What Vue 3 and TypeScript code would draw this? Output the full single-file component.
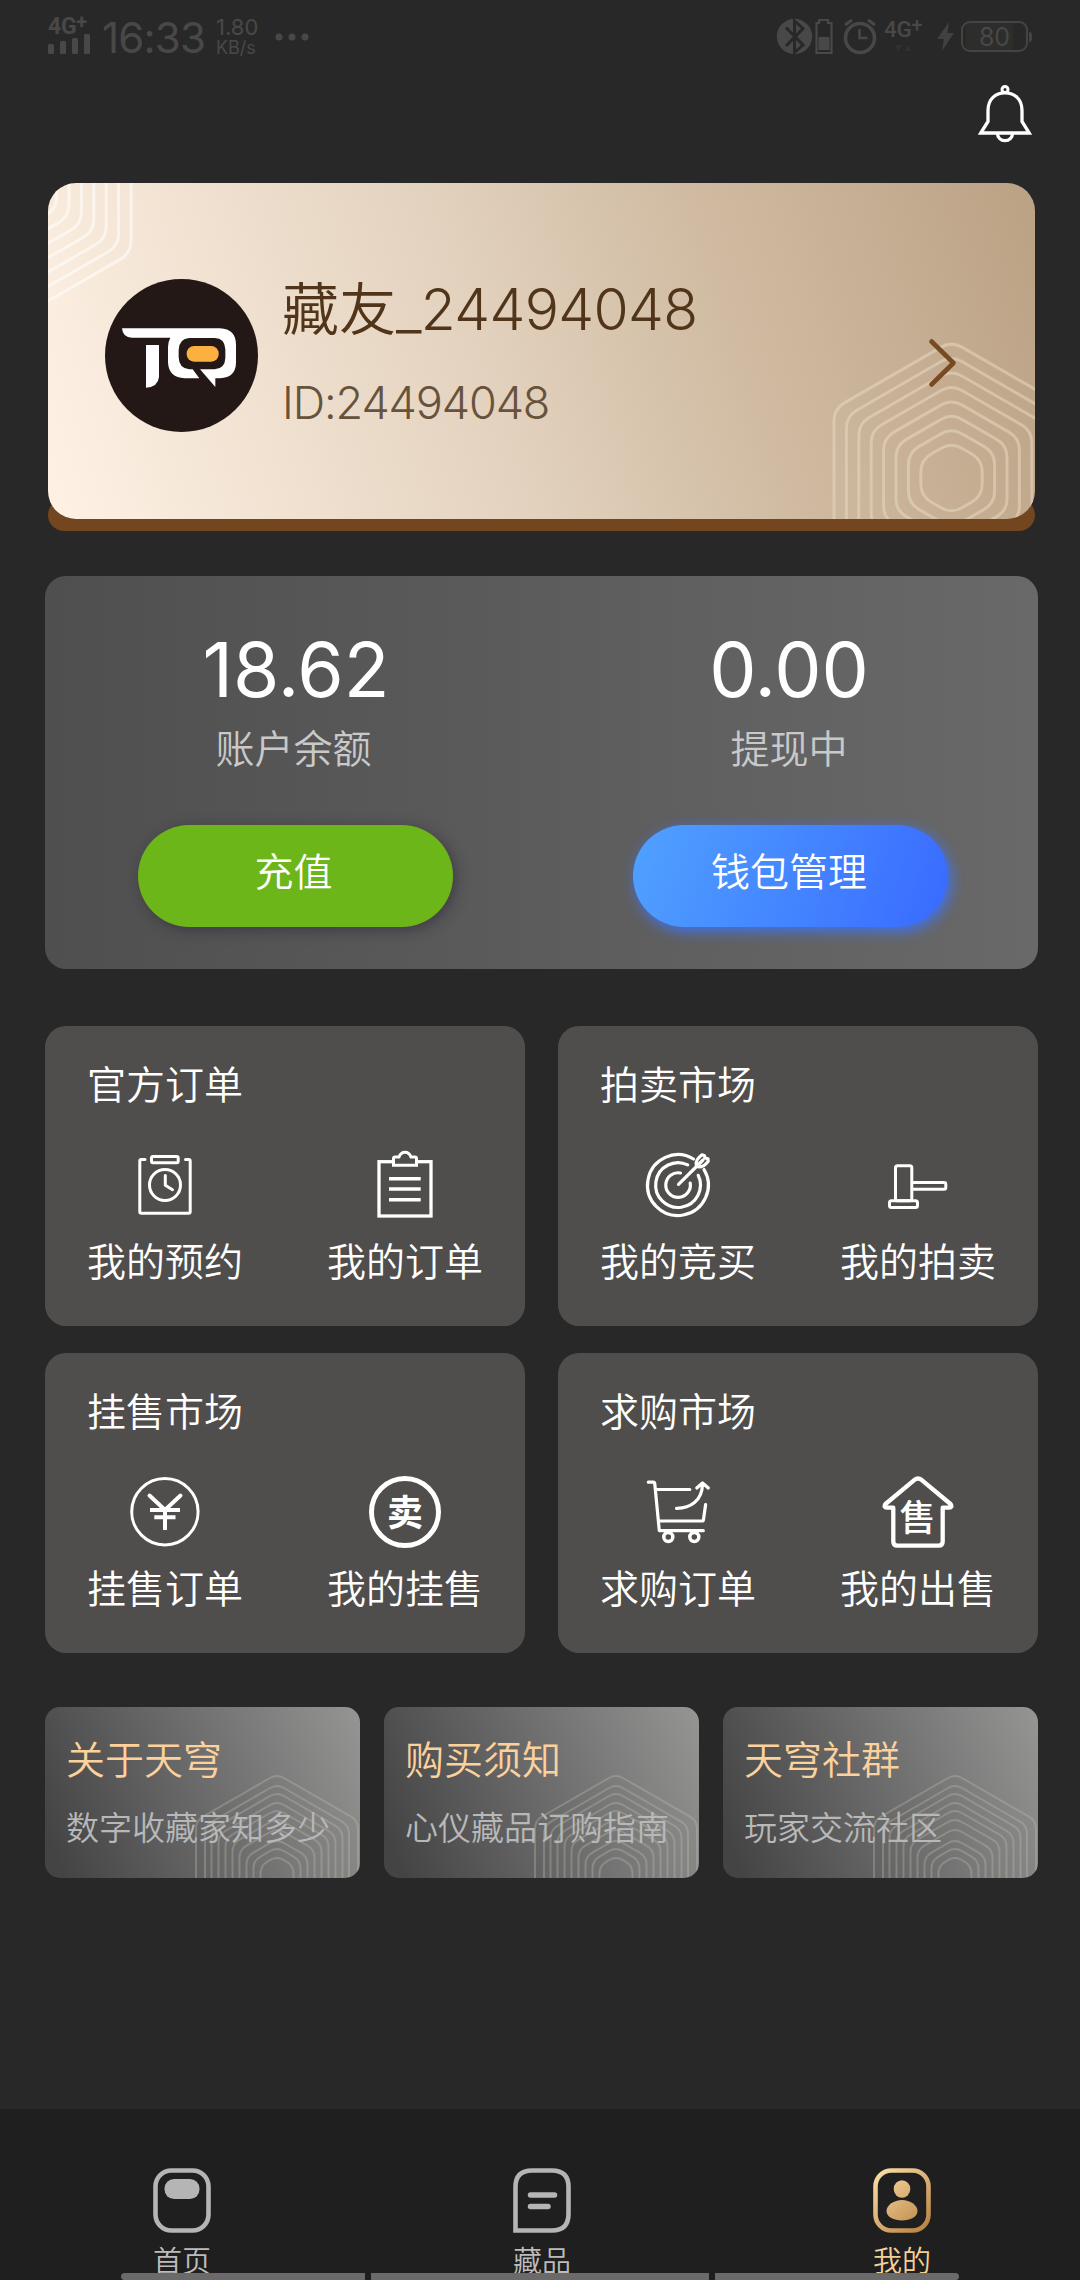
<script setup lang="ts">
interface MenuItem { label: string; icon: string }
interface MenuGroup { title: string; items: MenuItem[] }
interface Promo { title: string; desc: string }

const groups: MenuGroup[] = [
  { title: '官方订单', items: [{ label: '我的预约', icon: 'booking' }, { label: '我的订单', icon: 'orders' }] },
  { title: '拍卖市场', items: [{ label: '我的竞买', icon: 'target' }, { label: '我的拍卖', icon: 'gavel' }] },
  { title: '挂售市场', items: [{ label: '挂售订单', icon: 'yen' }, { label: '我的挂售', icon: 'sell' }] },
  { title: '求购市场', items: [{ label: '求购订单', icon: 'cart' }, { label: '我的出售', icon: 'house' }] },
]

const promos: Promo[] = [
  { title: '关于天穹', desc: '数字收藏家知多少' },
  { title: '购买须知', desc: '心仪藏品订购指南' },
  { title: '天穹社群', desc: '玩家交流社区' },
]

const tabs = [
  { label: '首页', icon: 'home', active: false },
  { label: '藏品', icon: 'collection', active: false },
  { label: '我的', icon: 'mine', active: true },
]

// Closed polygon whose corners are softened by a quadratic curve of length r.
function rounded(points: [number, number][], r: number): string {
  const n = points.length
  let d = ''
  for (let i = 0; i < n; i++) {
    const p = points[i]
    const prev = points[(i + n - 1) % n]
    const next = points[(i + 1) % n]
    const toward = (q: [number, number]) => {
      const len = Math.hypot(q[0] - p[0], q[1] - p[1])
      const k = Math.min(r / len, 0.5)
      return `${(p[0] + (q[0] - p[0]) * k).toFixed(2)} ${(p[1] + (q[1] - p[1]) * k).toFixed(2)}`
    }
    d += `${i ? 'L' : 'M'}${toward(prev)}Q${p[0]} ${p[1]} ${toward(next)}`
  }
  return d + 'Z'
}

function hexagon(cx: number, cy: number, w: number, h: number, r: number): string {
  const s = h - w * 0.577
  return rounded([[cx, cy - h], [cx + w, cy - s], [cx + w, cy + s], [cx, cy + h], [cx - w, cy + s], [cx - w, cy - s]], r)
}

const ringWidths = [0, 1, 2, 3, 4, 5, 6, 7].map((i) => 117.5 - i * 12.4)
const cornerRings = ringWidths.map((w) => hexagon(903.5, 295, w, w * 1.165, 12))
const topRings = ringWidths.map((w) => hexagon(-34.5, 1, w, w * 1.165, 12))

const promoRings = [
  [81, 100], [72, 90], [65.5, 82], [58.5, 73], [51.5, 65], [44.5, 56], [37.5, 46], [30.5, 35], [23.5, 27], [16.5, 18],
].map(([w, top]) => hexagon(232, 169, w, top + 2, 8))
</script>

<template>
  <div class="page">
    <div class="status">
      <div class="net">
        <span class="g4">4G<sup>+</sup></span>
        <svg width="44" height="21" viewBox="0 0 44 21">
          <g fill="#484848"><rect x="0" y="10" width="6" height="10" rx="1.5" /><rect x="12" y="7" width="6" height="13" rx="1.5" /><rect x="24" y="4" width="6" height="16" rx="1.5" /><rect x="36" y="0" width="6" height="20" rx="1.5" /></g>
        </svg>
      </div>
      <span class="clock">16:33</span>
      <div class="speed"><span>1.80</span><span>KB/s</span></div>
      <svg class="dots" width="36" height="10" viewBox="0 0 36 10"><g fill="#484848"><circle cx="4" cy="5" r="3.5" /><circle cx="17" cy="5" r="3.5" /><circle cx="30" cy="5" r="3.5" /></g></svg>
      <svg class="sys" width="112" height="44" viewBox="776 14 112 44">
        <circle cx="794.5" cy="36.5" r="17.7" fill="#484848" />
        <path d="M786 27.500l17 17.500l-8.500 7.500V21l8.500 7.500l-17 17.500" fill="none" stroke="#282828" stroke-width="3" />
        <path d="M819 20h9v3h3.500v30h-15V23h2.500z" fill="none" stroke="#484848" stroke-width="2.200" />
        <rect x="818.500" y="37" width="11" height="13" fill="#484848" />
        <g fill="none" stroke="#484848">
          <circle cx="860" cy="38" r="14.500" stroke-width="3.500" />
          <path d="M859.500 29v9h8" stroke-width="2.500" />
          <path d="M845 25l7-5M875 25l-7-5" stroke-width="3" />
        </g>
      </svg>
      <div class="net2"><span class="g4">4G<sup>+</sup></span><svg width="20" height="10" viewBox="0 0 20 10"><path d="M2 2h7l-3.500 6zM12 8h6l-3-6z" fill="#303030" /></svg></div>
      <svg class="bolt" width="18" height="30" viewBox="0 0 18 30"><path d="M12 0L0 17h7L5 29 17 11H10.500z" fill="#414141" /></svg>
      <div class="batt"><span>80</span></div>
      <i class="nub"></i>
    </div>

    <header class="top">
      <svg width="60" height="62" viewBox="0 0 60 62" fill="none" stroke="#fff" stroke-width="3.300">
        <circle cx="29" cy="5.500" r="3" stroke-width="3" />
        <path d="M4.800 49L12 37.500V26.500C12 15 19.500 8.800 29 8.800S46 15 46 26.500V37.500L53.200 49Z" />
        <path d="M21.500 49.500c0 4 3.300 7.200 7.500 7.200s7.500-3.200 7.500-7.200" />
      </svg>
    </header>

    <section class="profile">
      <div class="profile-card">
        <svg class="rings" width="987" height="336" viewBox="0 0 987 336" fill="none">
          <g stroke="#fff" stroke-opacity="0.550" stroke-width="3"><path v-for="(d, i) in topRings" :key="i" :d="d" /></g>
          <g stroke="#eadcc6" stroke-opacity="0.500" stroke-width="3"><path v-for="(d, i) in cornerRings" :key="i" :d="d" /></g>
        </svg>
        <svg class="avatar" width="153" height="153" viewBox="225 326 459 459">
          <circle cx="454.500" cy="555.500" r="229.500" fill="#231815" />
          <path fill="#fff" d="M276 474H570Q618 476 618 524V576Q618 622 570 624H556V650L510 597H554Q585 595 586 563V537Q585 504 554 503H478Q447 505 446 539V561Q447 595 478 597H488L508 624H464Q416 622 414 576V530Q414 514 421 502H306Q278 502 276 474Z" />
          <path fill="#fff" d="M348 524H387V620Q384 650 348 652Z" />
          <rect x="470" y="527" width="96" height="47" rx="22" fill="#fbb040" />
        </svg>
        <div class="who">
          <div class="name">藏友<span>_24494048</span></div>
          <div class="uid">ID:24494048</div>
        </div>
        <svg class="chev" width="30" height="52" viewBox="0 0 30 52"><path d="M3.500 4.500L25.500 26 3.500 47.500" fill="none" stroke="#784a22" stroke-width="4.600" stroke-linecap="round" stroke-linejoin="round" /></svg>
      </div>
    </section>

    <section class="wallet">
      <div class="acct"><div class="num">18.62</div><div class="cap">账户余额</div><div class="btn green">充值</div></div>
      <div class="acct"><div class="num zero">0.00</div><div class="cap">提现中</div><div class="btn blue">钱包管理</div></div>
    </section>

    <section class="menus">
      <div v-for="g in groups" :key="g.title" class="menu">
        <div class="menu-title">{{ g.title }}</div>
        <div class="menu-row">
          <div v-for="m in g.items" :key="m.label" class="menu-item">
            <svg width="72" height="72" viewBox="0 0 72 72" fill="none" stroke="#fff" stroke-width="3">
              <g v-if="m.icon === 'booking'" stroke-linecap="round" stroke-linejoin="round">
                <path d="M16 10.500H12.300Q10.800 10.500 10.800 12V62.500Q10.800 64.200 12.500 64.200H59.500Q61.200 64.200 61.200 62.500V12Q61.200 10.500 59.700 10.500H56.500" />
                <rect x="22.500" y="7.500" width="26.700" height="6.200" rx="1.500" />
                <circle cx="36" cy="36" r="15.500" />
                <path d="M36.300 26.500V36.300L43.500 40.700" />
              </g>
              <g v-else-if="m.icon === 'orders'">
                <rect x="10" y="12.700" width="52" height="54.300" stroke-width="3.300" />
                <path d="M24.500 16.200V9.500Q24.500 8 26 8H30C31.200 4.800 33 3.300 36 3.300S40.800 4.800 42 8H46Q47.500 8 47.500 9.500V16.200Z" fill="#4f4e4c" />
                <path d="M20 29.700H51.700M20 40H51.700M20 50.700H51.700" stroke-width="3.600" />
              </g>
              <g v-else-if="m.icon === 'target'" stroke-linecap="round" stroke-linejoin="round" stroke-width="3.200">
                <path d="M51.500 10A30.400 30.400 0 1 0 62 20.500" />
                <path d="M45.800 15.900A22.400 22.400 0 1 0 56.200 26.300" />
                <path d="M38.500 24A12.300 12.300 0 1 0 48.200 34" />
                <path d="M36.500 35.300L54.500 17.500M54.500 17.500C53 12 56 9 60 5.800L62.500 6.800 63 9 66 9.800 66.200 12.200C63 16.500 60 19 54.500 17.500ZM55 17L61 11" />
              </g>
              <g v-else-if="m.icon === 'gavel'" stroke-linejoin="round">
                <rect x="13.500" y="16.700" width="16.300" height="35" rx="2" />
                <rect x="7.500" y="51.800" width="28" height="6.700" rx="2" />
                <path d="M30 33.500H62Q63.800 33.500 63.800 35.200V38.500Q63.800 40.200 62 40.200H30" />
              </g>
              <g v-else-if="m.icon === 'yen'" stroke-width="4">
                <circle cx="35.900" cy="35.700" r="33.200" stroke-width="3" />
                <path d="M20.500 19.500L36 34 51.500 19.500" stroke-linecap="round" />
                <path d="M21 34H51M25.300 41.300H46.500M36 34V54" />
              </g>
              <g v-else-if="m.icon === 'sell'">
                <circle cx="36" cy="36" r="33.500" stroke-width="5" />
                <text x="36" y="49.500" class="glyph" font-size="36">卖</text>
              </g>
              <g v-else-if="m.icon === 'cart'" stroke-linecap="round" stroke-linejoin="round" stroke-width="3.200">
                <path d="M6.300 6.200H11Q12.600 6.200 12.800 8L17.300 54.700H61.300" />
                <path d="M14.500 13.500H47.800M16.800 45H60Q61.300 45 61.500 43.500L63.600 28.500" />
                <circle cx="26.300" cy="61" r="4.500" stroke-width="3.500" /><circle cx="52.300" cy="61" r="4.500" stroke-width="3.500" />
                <path d="M34.500 32.300C48 32.500 60.300 25 60.500 8M54.800 12L60.500 7 66.300 12" />
              </g>
              <g v-else stroke-linejoin="round" stroke-width="4.300">
                <path d="M32.500 3.800Q36 1.200 39.500 3.800L68.500 28Q70.800 31.700 67 31.700H60.700V65.500Q60.700 69.700 56.500 69.700H15.500Q11.300 69.700 11.300 65.500V31.700H5Q1.200 31.700 3.500 28Z" />
                <text x="35.500" y="54.800" class="glyph house" font-size="36">售</text>
              </g>
            </svg>
            <span>{{ m.label }}</span>
          </div>
        </div>
      </div>
    </section>

    <section class="promos">
      <div v-for="p in promos" :key="p.title" class="promo">
        <svg class="rings" width="315" height="171" viewBox="0 0 315 171" fill="none" stroke="#c2beae" stroke-opacity="0.330" stroke-width="2"><path v-for="(d, i) in promoRings" :key="i" :d="d" /></svg>
        <div class="promo-title">{{ p.title }}</div>
        <div class="promo-desc">{{ p.desc }}</div>
      </div>
    </section>

    <nav class="tabs">
      <div v-for="t in tabs" :key="t.label" class="tab" :class="{ active: t.active }">
        <svg width="58" height="65" viewBox="0 0 58 65" fill="none">
          <defs><linearGradient id="gold" x1="0" y1="0" x2="58" y2="65" gradientUnits="userSpaceOnUse"><stop offset="0" stop-color="#ffe3ad" /><stop offset="1" stop-color="#b47c3c" /></linearGradient></defs>
          <g v-if="t.icon === 'home'"><rect x="2.500" y="2.500" width="53" height="60" rx="16" stroke="#b5b5b5" stroke-width="4.600" /><rect x="11.500" y="11" width="35" height="20" rx="9.500" fill="#b5b5b5" /></g>
          <g v-else-if="t.icon === 'collection'" stroke="#b5b5b5"><path d="M2.500 62.500V19Q2.500 2.500 19 2.500H39Q55.500 2.500 55.500 19V46Q55.500 62.500 39 62.500Z" stroke-width="4.600" /><path d="M17.500 27H41.500M17.500 38.500H35" stroke-width="5.500" stroke-linecap="round" /></g>
          <g v-else><rect x="2.500" y="2.500" width="53" height="60" rx="16" stroke="url(#gold)" stroke-width="4.600" /><ellipse cx="29" cy="21" rx="8.300" ry="8.700" fill="url(#gold)" /><path d="M29 32C37 32 44.500 37 44.500 43S37 52.500 29 52.500 13.500 49 13.500 43 21 32 29 32Z" fill="url(#gold)" /></g>
        </svg>
        <span>{{ t.label }}</span>
      </div>
      <div class="gesture"><i class="side l"></i><i class="mid"></i><i class="side r"></i></div>
    </nav>
  </div>
</template>

<style>
body { margin: 0; background: #282828; }
</style>

<style scoped>
.page { width: 1080px; height: 2280px; display: flex; flex-direction: column; background: #282828; color: #fff; font-family: Inter, "Noto Sans CJK SC", sans-serif; font-weight: 350; overflow: hidden; box-sizing: border-box; }
.page svg { display: block; flex: none; }
.status { height: 84px; flex: none; display: flex; align-items: flex-start; color: #484848; }
.net { width: 44px; margin: 17px 0 0 48px; }
.net svg { margin-top: -2px; }
.g4 { display: block; font: 700 23px/19px Roboto, sans-serif; letter-spacing: -0.3px; white-space: nowrap; height: 19px; }
.g4 sup { font-size: 20px; line-height: 0; vertical-align: 5px; }
.clock { width: 100px; margin: 17px 0 0 10px; font-size: 42px; line-height: 42px; font-weight: 400; letter-spacing: -0.800px; white-space: nowrap; }
.speed { width: 46px; margin: 17px 0 0 14px; display: flex; flex-direction: column; font: 400 22px/21px Inter, sans-serif; white-space: nowrap; }
.speed span + span { font-size: 18px; line-height: 19px; }
.dots { margin: 32px 0 0 13px; }
.sys { margin: 14px 0 0 465px; }
.net2 { width: 42px; margin: 20px 0 0 -4px; }
.net2 .g4 { font-weight: 500; font-size: 22.500px; }
.net2 svg { margin: 4px 0 0 9px; }
.bolt { margin: 22px 0 0 11px; }
.batt { width: 63px; height: 27px; margin: 21px 0 0 6px; border: 2px solid #444; border-radius: 9px; display: flex; justify-content: center; align-items: center; font-size: 25px; font-weight: 400; background: linear-gradient(90deg, transparent 3px, #2d2d2b 3px 50px, transparent 50px); }
.nub { width: 3px; height: 10px; margin: 32px 0 0 1px; background: #444; border-radius: 0 3px 3px 0; }
.top { height: 99px; flex: none; padding-right: 44px; display: flex; justify-content: flex-end; box-sizing: border-box; }
.profile { position: relative; flex: none; margin: 0 45px 0 48px; height: 348px; }
.profile::before { content: ""; position: absolute; left: 0; right: 0; bottom: 0; height: 32px; border-radius: 16px; background: #74461f; }
.profile-card { position: relative; height: 336px; border-radius: 28px; overflow: hidden; display: flex; align-items: flex-start; background: linear-gradient(72deg, #fff2e5 0%, #e2d1bd 45%, #d0bba2 68%, #bca386 98%); }
.rings { position: absolute; left: 0; top: 0; }
.avatar { position: relative; margin: 96px 0 0 57px; }
.who { position: relative; width: 600px; margin: 88px 0 0 24px; }
.name { height: 80px; line-height: 77px; font-size: 57px; color: #50351a; white-space: nowrap; }
.name span { font-weight: 300; letter-spacing: -0.650px; }
.uid { margin-top: 22px; height: 60px; line-height: 60px; font-size: 45px; font-weight: 300; color: #67523b; letter-spacing: -1.100px; }
.chev { position: relative; margin: 154px 0 0 46px; }
.wallet { flex: none; height: 393px; margin: 45px 42px 0 45px; border-radius: 21px; display: flex; background: linear-gradient(90deg, #4f4f4f, #696969); }
.acct { width: 500px; display: flex; flex-direction: column; align-items: center; }
.acct + .acct { width: 493px; margin-left: -1px; }
.num { margin-top: 52px; height: 84px; line-height: 84px; font-size: 75px; font-weight: 370; padding-left: 2px; }
.zero { padding: 0 3px 0 0; }
.cap { margin-top: 9px; height: 56px; line-height: 56px; font-size: 39px; color: #c9c9c9; margin-left: -3px; }
.btn { width: 315px; height: 102px; margin-top: 48px; border-radius: 51px; line-height: 94px; text-align: center; font-size: 39px; text-indent: -3px; }
.green { background: #6cb61a; box-shadow: 3px 3px 14px rgba(40, 30, 50, .5); }
.blue { background: linear-gradient(110deg, #4f9fff 5%, #3a6dff 95%); box-shadow: 3px 4px 14px #3f74f6; }
.menus { flex: none; margin: 57px 42px 0 45px; display: grid; grid-template-columns: 480px 480px; gap: 27px 33px; }
.menu { height: 300px; border-radius: 21px; background: #4f4e4c; }
.menu-title { padding: 31px 0 0 42px; height: 56px; line-height: 56px; font-size: 39px; }
.menu-row { display: flex; margin-top: 36px; }
.menu-item { width: 240px; display: flex; flex-direction: column; align-items: center; font-size: 39px; line-height: 56px; }
.menu-item span { margin-top: 13px; }
.glyph { fill: #fff; stroke: none; font-family: "Noto Sans CJK SC", sans-serif; font-weight: 700; text-anchor: middle; }
.house { font-weight: 500; }
.promos { flex: none; margin: 54px 42px 0 45px; display: flex; gap: 24px; }
.promo { position: relative; width: 315px; height: 171px; border-radius: 15px; overflow: hidden; background: linear-gradient(68deg, #444 5%, #6f6f6f 55%, #959594 100%); }
.promo-title { position: relative; padding: 25px 0 0 21px; height: 56px; line-height: 56px; font-size: 39px; color: #fcd19c; }
.promo-desc { position: relative; padding: 16px 0 0 21px; height: 48px; line-height: 48px; font-size: 33px; color: #b8b8b8; }
.tabs { position: relative; margin-top: auto; height: 171px; flex: none; background: #1f1f1f; display: flex; padding-left: 2px; box-sizing: border-box; }
.tab { width: 360px; flex: none; display: flex; flex-direction: column; align-items: center; font-size: 29px; line-height: 40px; color: #bcbcbc; }
.tab svg { margin-top: 59px; }
.tab span { margin-top: 9px; }
.tab.active { color: #f3d09a; }
.gesture { position: absolute; left: 121px; bottom: 0; height: 7px; display: flex; gap: 6px; }
.gesture i { background: #6b6969; }
.side { width: 244px; }
.mid { width: 338px; }
.l { border-radius: 4px 0 0 4px; }
.r { border-radius: 0 4px 4px 0; }
</style>
